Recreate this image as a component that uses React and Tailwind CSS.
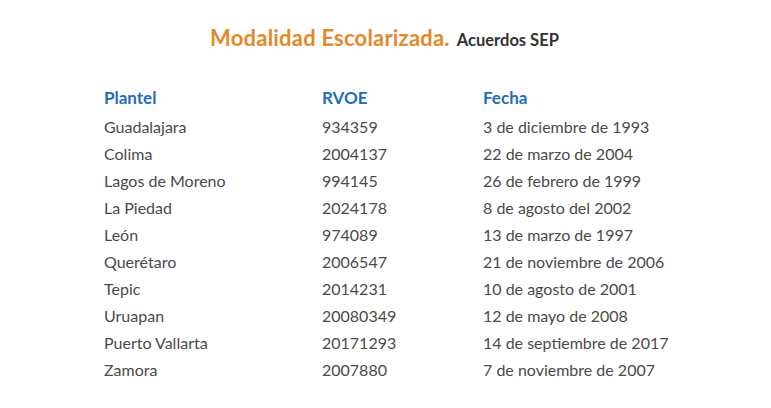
import React from 'react';

const rows = [
  ['Guadalajara', '934359', '3 de diciembre de 1993'],
  ['Colima', '2004137', '22 de marzo de 2004'],
  ['Lagos de Moreno', '994145', '26 de febrero de 1999'],
  ['La Piedad', '2024178', '8 de agosto del 2002'],
  ['León', '974089', '13 de marzo de 1997'],
  ['Querétaro', '2006547', '21 de noviembre de 2006'],
  ['Tepic', '2014231', '10 de agosto de 2001'],
  ['Uruapan', '20080349', '12 de mayo de 2008'],
  ['Puerto Vallarta', '20171293', '14 de septiembre de 2017'],
  ['Zamora', '2007880', '7 de noviembre de 2007'],
];

const App = () => {
  return (
    <div className="w-[771px] h-[408px] bg-white font-['Lato','Liberation_Sans',sans-serif]">
      {/* Title */}
      <div className="flex justify-center items-baseline gap-[7px] pt-[21px] pr-[2px]">
        <span className="text-[22px] font-bold text-[#e3892a] tracking-[0.2px]">Modalidad Escolarizada.</span>
        <span className="text-[16.5px] font-bold text-[#333]">Acuerdos SEP</span>
      </div>

      {/* Table */}
      <div className="mt-[29px] pl-[104px]">
        <div className="grid grid-cols-[218px_161px_1fr] h-[30px] items-center text-[17px] font-bold text-[#1f6cbf]">
          <div>Plantel</div>
          <div>RVOE</div>
          <div>Fecha</div>
        </div>
        {rows.map((r) => (
          <div key={r[0]} className="grid grid-cols-[218px_161px_1fr] h-[27px] items-center text-[16px] text-[#4a4a4a]">
            <div>{r[0]}</div>
            <div>{r[1]}</div>
            <div>{r[2]}</div>
          </div>
        ))}
      </div>
    </div>
  );
};

export default App;
